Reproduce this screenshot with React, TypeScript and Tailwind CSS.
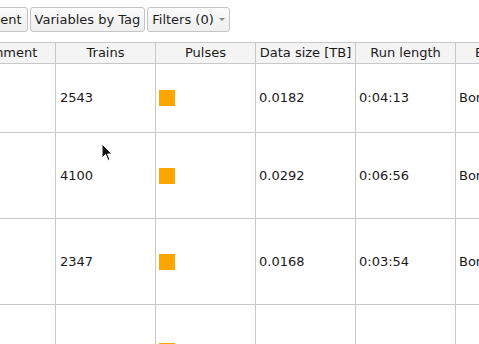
// Run table, scrolled: toolbar of view buttons over a horizontally scrolled grid.

const rows = [
  { trains: "2543", size: "0.0182", length: "0:04:13", h: "h-[69px]" },
  { trains: "4100", size: "0.0292", length: "0:06:56", h: "h-[86px]" },
  { trains: "2347", size: "0.0168", length: "0:03:54", h: "h-[86px]" },
  { trains: "2349", size: "0.0168", length: "0:03:54", h: "h-[92px]" },
];

const headers = ["Comment", "Trains", "Pulses", "Data size [TB]", "Run length", "Beamline"];

function ToolButton({ children }: { children: React.ReactNode }) {
  return (
    <button className="flex h-[25px] items-center rounded-[3px] border border-[#c4c4c4] bg-gradient-to-b from-[#fbfbfb] to-[#efefef] px-[4px] text-[13px] text-[#1c1c1c]">
      {children}
    </button>
  );
}

function Cursor() {
  return (
    <svg
      aria-hidden
      viewBox="0 0 12 19"
      className="pointer-events-none absolute left-[101px] top-[143px] h-[19px] w-[12px]"
    >
      <path
        d="M1 1 L1 15 L4.5 11.5 L7 17.5 L9 16.6 L6.6 11 L11 11 Z"
        fill="#111"
        stroke="#fff"
        strokeWidth="1"
        strokeLinejoin="round"
      />
    </svg>
  );
}

export default function App() {
  return (
    <div
      className="relative h-[344px] w-[479px] overflow-hidden bg-white"
      style={{ fontFamily: '"DejaVu Sans", sans-serif' }}
    >
      {/* Toolbar — scrolled left so the first button is cut. */}
      <div className="-ml-[50px] flex h-[42px] items-start gap-[2px] pt-[7px]">
        <ToolButton>
          <span className="pr-[1px]">Alignment</span>
        </ToolButton>
        <ToolButton>Variables by Tag</ToolButton>
        <ToolButton>
          Filters (0)
          <span className="ml-[5px] h-0 w-0 border-x-[3px] border-t-[3px] border-x-transparent border-t-[#888]" />
        </ToolButton>
      </div>

      <div className="overflow-hidden">
        <div className="-ml-[44px] grid w-max grid-cols-[100px_100px_100px_100px_100px_100px] text-[13px] text-[#1a1a1a]">
          {headers.map((h) => (
            <div
              key={h}
              className="flex h-[22px] items-center justify-center border-y border-r border-[#c8c8c8] bg-[#f4f4f4]"
            >
              {h}
            </div>
          ))}
          {rows.map((r, i) => (
            <div key={i} className="contents">
              <div className={`${r.h} border-b border-r border-[#c8c8c8]`} />
              <div className={`${r.h} flex items-center border-b border-r border-[#c8c8c8] px-[4px]`}>
                {r.trains}
              </div>
              <div className={`${r.h} flex items-center border-b border-r border-[#c8c8c8] px-[3px]`}>
                <span className="h-4 w-4 bg-[#ffa500]" />
              </div>
              <div className={`${r.h} flex items-center border-b border-r border-[#c8c8c8] px-[3px]`}>
                {r.size}
              </div>
              <div className={`${r.h} flex items-center border-b border-r border-[#c8c8c8] px-[3px]`}>
                {r.length}
              </div>
              <div className={`${r.h} flex items-center border-b border-r border-[#c8c8c8] px-[3px]`}>
                Borealis
              </div>
            </div>
          ))}
        </div>
      </div>

      <Cursor />
    </div>
  );
}
